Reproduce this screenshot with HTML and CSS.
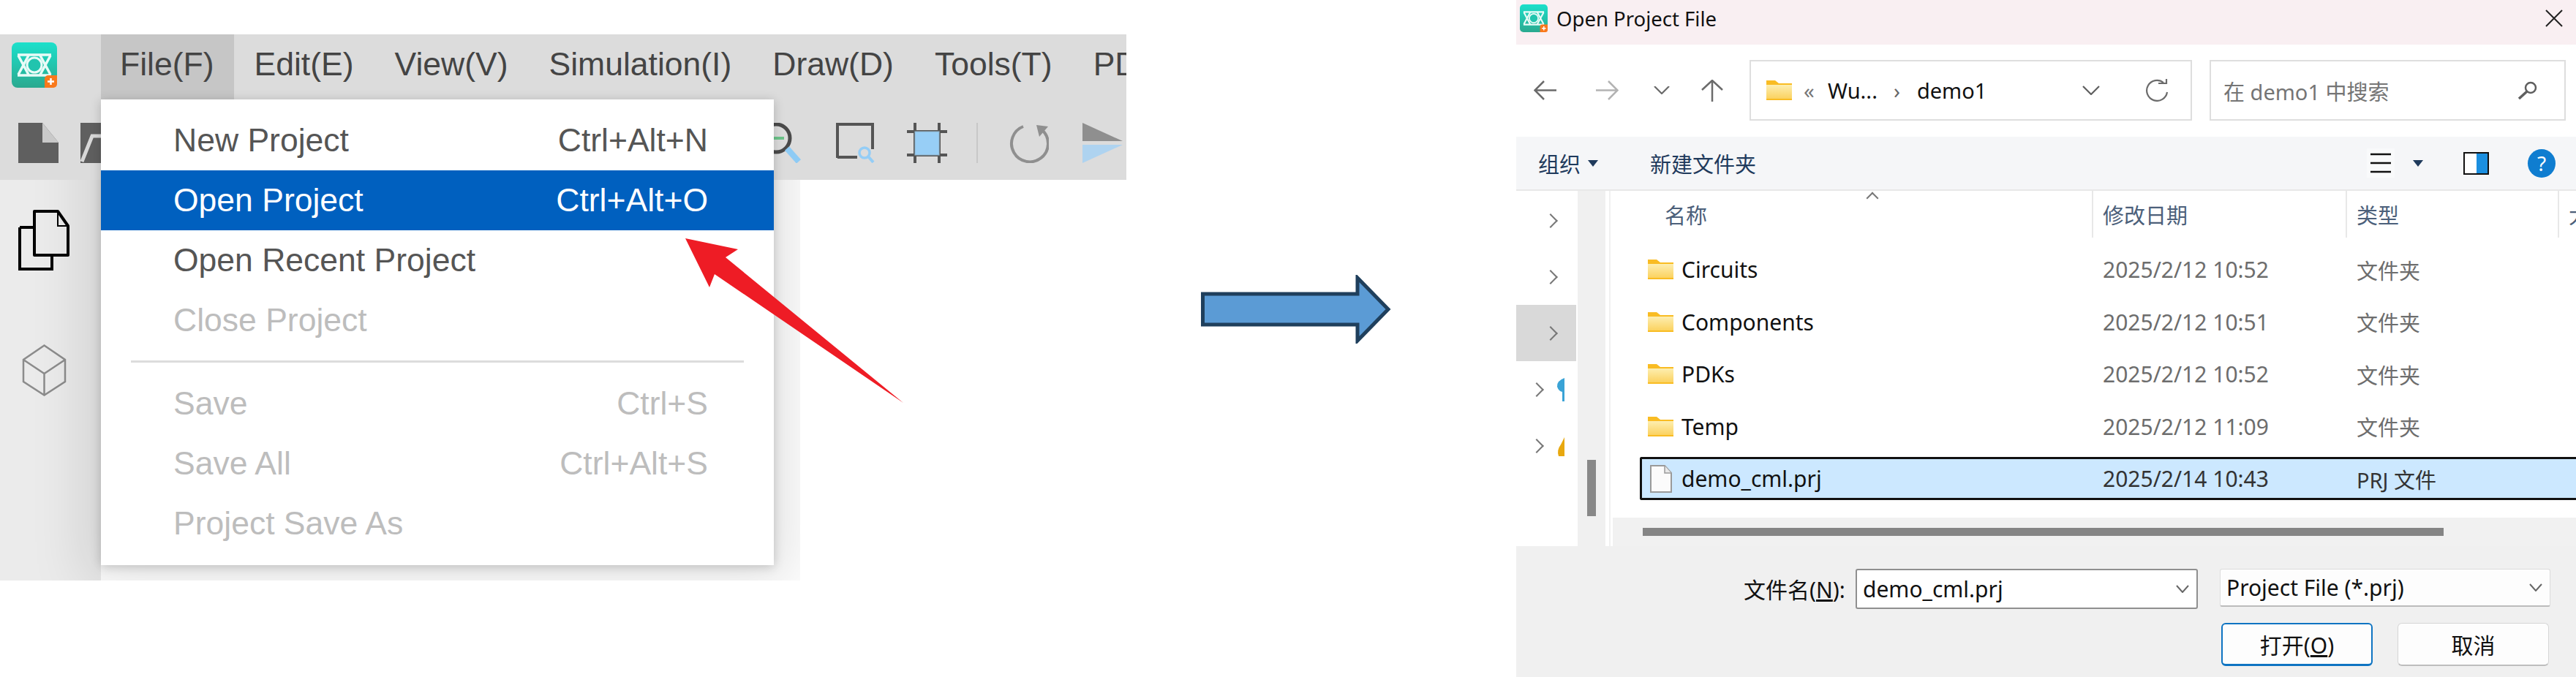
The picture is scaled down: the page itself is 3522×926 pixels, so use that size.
FILE: index.html
```html
<!DOCTYPE html>
<html lang="en">
  <head>
    <meta charset="UTF-8" />
    <title>Open Project</title>
    <link rel="stylesheet" href="styles.css">
  </head>
  <body>
    <svg class="defs" width="0" height="0">
      <defs>
        <linearGradient id="logoFill" x1="0" y1="0" x2="0" y2="1">
          <stop offset="0" stop-color="#1ce0cb" />
          <stop offset="1" stop-color="#2aa98f" />
        </linearGradient>
        <linearGradient id="folderFill" x1="0" y1="0" x2="0" y2="1">
          <stop offset="0" stop-color="#fdeeb0" />
          <stop offset="1" stop-color="#fbd260" />
        </linearGradient>
        <symbol id="logo" viewBox="0 0 62 62">
          <rect width="62" height="62" rx="8" fill="url(#logoFill)" />
          <path d="M8 17H54M8 45H54M9 18L23 44M23 18L9 44M39 18L53 44M53 18L39 44" fill="none" stroke="#e9fbf7" stroke-width="3.500" />
          <circle cx="31" cy="31" r="10" fill="#21c4ae" stroke="#e9fbf7" stroke-width="3" />
          <path d="M45 50a5 5 0 0 1 5-5h12v12a5 5 0 0 1-5 5H45z" fill="#f9791c" />
          <path d="M53.500 49v9M49 53.500h9" stroke="#fff" stroke-width="2.500" />
        </symbol>
        <symbol id="folder" viewBox="0 0 35 27">
          <path d="M0 0H12L17 4H35V27H0z" fill="#f9bc23" />
          <rect y="6" width="35" height="19" fill="url(#folderFill)" />
        </symbol>
      </defs>
    </svg>

    <div class="app">
      <div class="menubar">
        <div class="logo-cell"><svg class="logo-big"><use href="#logo" /></svg></div>
        <span class="menubar-item active">File(F)</span>
        <span class="menubar-item">Edit(E)</span>
        <span class="menubar-item">View(V)</span>
        <span class="menubar-item">Simulation(I)</span>
        <span class="menubar-item">Draw(D)</span>
        <span class="menubar-item">Tools(T)</span>
        <span class="menubar-item">PDK</span>
      </div>
      <div class="toolbar">
        <svg class="tool tool-new" viewBox="0 0 55 55">
          <path d="M0 0H33L55 27V55H0z" fill="#5f5f5f" />
          <path d="M33 0L55 27H33z" fill="#c9c9c9" />
        </svg>
        <svg class="tool tool-open" viewBox="0 0 55 55">
          <rect width="55" height="55" fill="#5f5f5f" />
          <path d="M2 53L16 18H40" fill="none" stroke="#d8d8d8" stroke-width="5" />
        </svg>
        <svg class="tool tool-zoom" viewBox="0 0 55 55">
          <circle cx="21" cy="21" r="19" fill="none" stroke="#4a4a4a" stroke-width="5" />
          <path d="M10 21H32" stroke="#6cc48a" stroke-width="4" />
          <path d="M36 35L52 53" stroke="#8ecbf5" stroke-width="8" />
        </svg>
        <svg class="tool tool-fit" viewBox="0 0 55 55">
          <path d="M3 48V2H51V36" fill="none" stroke="#555" stroke-width="4" />
          <path d="M3 47H30" stroke="#555" stroke-width="4" />
          <circle cx="40" cy="41" r="7" fill="none" stroke="#94cdf6" stroke-width="3.500" />
          <path d="M45 46L52 54" stroke="#94cdf6" stroke-width="4" />
        </svg>
        <svg class="tool tool-select" viewBox="0 0 55 55">
          <path d="M0 12H55M0 44H55M11 0V55M44 0V55" stroke="#555" stroke-width="4" />
          <rect x="11" y="12" width="33" height="32" fill="#97cef6" stroke="#8fb4cc" stroke-width="1" />
        </svg>
        <span class="tool-sep"></span>
        <svg class="tool tool-rotate" viewBox="0 0 55 55">
          <path d="M20 5A25 25 0 1 0 46 10" fill="none" stroke="#8f8f8f" stroke-width="4" />
          <path d="M38 3L54 5L42 19z" fill="#8f8f8f" />
        </svg>
        <svg class="tool tool-flip" viewBox="0 0 55 55">
          <path d="M0 0L55 25H0z" fill="#8f8f8f" />
          <path d="M0 30H55L0 55z" fill="#aed3f0" />
        </svg>
      </div>
      <div class="app-body">
        <div class="sidebar">
          <svg class="side-copy" viewBox="0 0 70 83">
            <path d="M2 24V81H46V64" fill="none" stroke="#000" stroke-width="4" />
            <path d="M2 24H22" stroke="#000" stroke-width="4" />
            <path d="M22 2H54L68 22V62H22z" fill="#ebebeb" stroke="#000" stroke-width="4" stroke-linejoin="round" />
            <path d="M54 2V22H68" fill="none" stroke="#000" stroke-width="2" />
          </svg>
          <svg class="side-cube" viewBox="0 0 61 71">
            <path d="M30.500 1.500L59 21V51L30.500 69.500L2 51V21zM2 21L30.500 40L59 21M30.500 40V69.500" fill="none" stroke="#8c8c8c" stroke-width="2.500" />
          </svg>
        </div>
        <div class="menu-glow"></div>
      </div>

      <div class="menu">
        <div class="menu-row"><span>New Project</span><span>Ctrl+Alt+N</span></div>
        <div class="menu-row selected"><span>Open Project</span><span>Ctrl+Alt+O</span></div>
        <div class="menu-row"><span>Open Recent Project</span></div>
        <div class="menu-row disabled"><span>Close Project</span></div>
        <div class="menu-sep"></div>
        <div class="menu-row disabled"><span>Save</span><span>Ctrl+S</span></div>
        <div class="menu-row disabled"><span>Save All</span><span>Ctrl+Alt+S</span></div>
        <div class="menu-row disabled"><span>Project Save As</span></div>
      </div>

      <svg class="red-arrow" viewBox="0 0 300 226">
        <path d="M1 0L73 15L56 26L299 225L41 49L34 67z" fill="#ee1c25" />
      </svg>
    </div>

    <div class="between">
      <svg class="blue-arrow" viewBox="0 0 260 94">
        <path d="M2.500 26H214V4L256 47L214 90V68H2.500z" fill="#5b9bd5" stroke="#1f3f5c" stroke-width="5" />
      </svg>
    </div>

    <div class="dialog">
      <div class="titlebar">
        <svg class="logo-small"><use href="#logo" /></svg>
        <span class="title-text">Open Project File</span>
        <svg class="close-x" viewBox="0 0 24 24">
          <path d="M1 1L23 23M23 1L1 23" stroke="#222" stroke-width="2" />
        </svg>
      </div>

      <div class="navbar">
        <svg class="nav-back" viewBox="0 0 31 27"><path d="M14 1L1.500 13.500L14 26M2 13.500H31" fill="none" stroke="#6b6b6b" stroke-width="2.500" /></svg>
        <svg class="nav-fwd" viewBox="0 0 31 27"><path d="M17 1L29.500 13.500L17 26M0 13.500H29" fill="none" stroke="#b3b3b3" stroke-width="2.500" /></svg>
        <svg class="nav-down" viewBox="0 0 22 11"><path d="M1 0L11 10L21 0" fill="none" stroke="#6b6b6b" stroke-width="2.200" /></svg>
        <svg class="nav-up" viewBox="0 0 30 30"><path d="M1 14L15 1L29 14M15 1V30" fill="none" stroke="#6b6b6b" stroke-width="2.500" /></svg>
        <div class="address">
          <svg class="addr-folder"><use href="#folder" /></svg>
          <span class="addr-more">«</span>
          <span class="addr-part">Wu...</span>
          <span class="addr-chev">›</span>
          <span class="addr-part">demo1</span>
          <svg class="addr-down" viewBox="0 0 24 13"><path d="M1 1L12 12L23 1" fill="none" stroke="#5f5f5f" stroke-width="2.200" /></svg>
          <svg class="addr-refresh" viewBox="0 0 31 31"><path d="M24 5A14 14 0 1 0 29 18" fill="none" stroke="#6b6b6b" stroke-width="2.200" /><path d="M17 6H28V0" fill="none" stroke="#6b6b6b" stroke-width="2.200" /></svg>
        </div>
        <div class="search">
          <span class="search-text">在 demo1 中搜索</span>
          <svg class="search-icon" viewBox="0 0 27 25"><circle cx="18" cy="9" r="7" fill="none" stroke="#5f5f5f" stroke-width="2.500" /><path d="M13 14L2 24" stroke="#5f5f5f" stroke-width="3.500" /></svg>
        </div>
      </div>

      <div class="cmdbar">
        <span class="cmd-org">组织</span>
        <span class="caret"></span>
        <span class="cmd-new">新建文件夹</span>
        <span class="view-btn">
          <svg viewBox="0 0 28 28"><path d="M0 2H28M0 14H28M0 26H28" stroke="#111" stroke-width="2.500" /></svg>
        </span>
        <span class="caret"></span>
        <svg class="pane-icon" viewBox="0 0 35 31">
          <rect x="1" y="1" width="33" height="29" fill="#fff" stroke="#111" stroke-width="2" />
          <rect x="18" y="2" width="15" height="27" fill="#1b8fe0" />
        </svg>
        <span class="help">?</span>
      </div>

      <div class="main">
        <div class="tree">
          <div class="tree-row"><span class="chev"></span></div>
          <div class="tree-row"><span class="chev"></span></div>
          <div class="tree-row on"><span class="chev"></span></div>
          <div class="tree-row shallow">
            <span class="chev"></span>
            <svg class="tree-icon" viewBox="0 0 11 32"><path d="M11 0Q0 4 1 12Q3 18 8 19V32H11z" fill="#3aa3d6" /></svg>
          </div>
          <div class="tree-row shallow">
            <span class="chev"></span>
            <svg class="tree-icon" viewBox="0 0 11 32"><path d="M11 4L6 14Q0 22 3 30H11z" fill="#e8a80f" /></svg>
          </div>
        </div>
        <div class="vtrack"><div class="vthumb"></div></div>
        <div class="list">
          <div class="list-head">
            <span class="head-name">名称<i class="sort"></i></span>
            <span class="head-date">修改日期</span>
            <span class="head-type">类型</span>
            <span class="head-size">大</span>
          </div>
          <div class="rows">
            <div class="row">
              <span class="cell-name"><svg class="row-icon"><use href="#folder" /></svg>Circuits</span>
              <span class="cell-date">2025/2/12 10:52</span><span class="cell-type">文件夹</span>
            </div>
            <div class="row">
              <span class="cell-name"><svg class="row-icon"><use href="#folder" /></svg>Components</span>
              <span class="cell-date">2025/2/12 10:51</span><span class="cell-type">文件夹</span>
            </div>
            <div class="row">
              <span class="cell-name"><svg class="row-icon"><use href="#folder" /></svg>PDKs</span>
              <span class="cell-date">2025/2/12 10:52</span><span class="cell-type">文件夹</span>
            </div>
            <div class="row">
              <span class="cell-name"><svg class="row-icon"><use href="#folder" /></svg>Temp</span>
              <span class="cell-date">2025/2/12 11:09</span><span class="cell-type">文件夹</span>
            </div>
            <div class="row picked">
              <span class="cell-name">
                <svg class="row-icon file-icon" viewBox="0 0 30 38"><path d="M1 1H20L29 11V37H1z" fill="#fbfbfb" stroke="#9a9a9a" stroke-width="2" /><path d="M20 1V11H29" fill="#e8e8e8" stroke="#9a9a9a" stroke-width="1.500" /></svg>
                demo_cml.prj
              </span>
              <span class="cell-date">2025/2/14 10:43</span><span class="cell-type">PRJ 文件</span>
            </div>
          </div>
          <div class="hbar"><div class="hthumb"></div></div>
        </div>
      </div>

      <div class="footer">
        <div class="foot-row">
          <span class="foot-label">文件名(<u>N</u>):</span>
          <div class="foot-input">
            <span>demo_cml.prj</span>
            <svg viewBox="0 0 18 11"><path d="M1 1L9 10L17 1" fill="none" stroke="#666" stroke-width="2" /></svg>
          </div>
          <div class="foot-filter">
            <span>Project File (*.prj)</span>
            <svg viewBox="0 0 18 11"><path d="M1 1L9 10L17 1" fill="none" stroke="#666" stroke-width="2" /></svg>
          </div>
        </div>
        <div class="foot-btns">
          <button class="btn primary">打开(<u>O</u>)</button>
          <button class="btn">取消</button>
        </div>
      </div>
    </div>
  </body>
</html>
```

FILE: styles.css
```css
* {
  box-sizing: border-box;
}

body {
  margin: 0;
  width: 3522px;
  height: 926px;
  display: flex;
  overflow: hidden;
  background: #fff;
  font-family: "Liberation Sans", Arial, sans-serif;
}

.defs {
  position: absolute;
}

svg {
  display: block;
  flex-shrink: 0;
}

/* left half: the application window */
.app {
  position: relative;
  width: 1540px;
  margin-top: 47px;
  flex-shrink: 0;
}

.menubar {
  height: 89px;
  display: flex;
  background: #dcdcdc;
  overflow: hidden;
  font-size: 44.5px;
  color: #444;
}

.logo-cell {
  width: 138px;
  padding: 11px 0 0 16px;
  flex-shrink: 0;
}

.logo-big {
  width: 62px;
  height: 62px;
}

.menubar-item {
  padding: 16px 28px 0;
  white-space: nowrap;
  flex-shrink: 0;
}

.menubar-item.active {
  background: #c6c6c6;
  padding: 16px 27px 0 26px;
}

.toolbar {
  height: 110px;
  padding: 32px 0 0 25px;
  display: flex;
  background: #dcdcdc;
}

.tool {
  width: 55px;
  height: 55px;
}

.tool-open {
  margin-left: 30px;
}

.tool-zoom {
  margin-left: 875px;
}

.tool-fit {
  margin-left: 47px;
}

.tool-select {
  margin-left: 43px;
}

.tool-sep {
  width: 2px;
  height: 55px;
  margin-left: 40px;
  background: #c8c8c8;
}

.tool-rotate {
  margin-left: 42px;
}

.tool-flip {
  margin-left: 46px;
}

.app-body {
  position: relative;
  width: 1094px;
  height: 548px;
  overflow: hidden;
}

.sidebar {
  width: 138px;
  height: 100%;
  background: #ebebeb;
  padding: 41px 0 0 25px;
}

.side-copy {
  width: 70px;
  height: 83px;
}

.side-cube {
  width: 61px;
  height: 71px;
  margin: 101px 0 0 5px;
}

/* soft shadow of the menu, cut off by the edge of the shot */
.menu-glow {
  position: absolute;
  left: 138px;
  top: -110px;
  width: 920px;
  height: 637px;
  box-shadow: 0 0 70px 25px rgba(0, 0, 0, 0.11);
}

.menu {
  position: absolute;
  left: 138px;
  top: 89px;
  width: 920px;
  height: 637px;
  padding: 15px 0 16px;
  background: #fff;
  font-size: 44.5px;
  color: #555;
  box-shadow: 0 2px 14px rgba(0, 0, 0, 0.2);
}

.menu-row {
  height: 82px;
  padding: 0 90px 0 99px;
  display: flex;
  align-items: center;
  justify-content: space-between;
}

.menu-row.selected {
  background: #0060bf;
  color: #fff;
}

.menu-row.disabled {
  color: #bdbdbd;
}

.menu-sep {
  height: 3px;
  margin: 14px 41px 15px;
  background: #dcdcdc;
}

.red-arrow {
  position: absolute;
  left: 936px;
  top: 279px;
  width: 300px;
  height: 226px;
}

/* the big arrow between the two shots */
.between {
  width: 533px;
  flex-shrink: 0;
  padding: 376px 0 0 102px;
}

.blue-arrow {
  width: 260px;
  height: 94px;
}

/* right half: the open file dialog */
.dialog {
  width: 1449px;
  height: 926px;
  display: flex;
  flex-direction: column;
  flex-shrink: 0;
  font-family: "Noto Sans", "Noto Sans CJK SC", sans-serif;
  font-size: 30px;
  color: #111;
}

.titlebar {
  height: 61px;
  padding: 6px 18px 0 5px;
  display: flex;
  background: #f9eff2;
  font-size: 27.5px;
}

.logo-small {
  width: 38px;
  height: 38px;
}

.title-text {
  margin-left: 12px;
  line-height: 40px;
}

.close-x {
  width: 24px;
  height: 24px;
  margin: 7px 0 0 auto;
}

.navbar {
  height: 126px;
  padding: 21px 14px 22px 0;
  display: flex;
  align-items: center;
  font-size: 29px;
}

.nav-back {
  width: 31px;
  height: 27px;
  margin-left: 24px;
}

.nav-fwd {
  width: 31px;
  height: 27px;
  margin-left: 54px;
}

.nav-down {
  width: 22px;
  height: 11px;
  margin-left: 48px;
}

.nav-up {
  width: 30px;
  height: 30px;
  margin-left: 43px;
}

.address {
  width: 605px;
  height: 83px;
  margin-left: 36px;
  padding: 0 30px 0 21px;
  display: flex;
  align-items: center;
  border: 2px solid #dedede;
}

.addr-folder {
  width: 35px;
  height: 27px;
}

.addr-more {
  margin-left: 16px;
  width: 33px;
  color: #777;
}

.addr-chev {
  width: 32px;
  margin-left: 22px;
  color: #666;
}

.addr-down {
  width: 24px;
  height: 13px;
  margin-left: auto;
}

.addr-refresh {
  width: 31px;
  height: 31px;
  margin-left: 63px;
}

.search {
  flex: 1;
  height: 83px;
  margin-left: 24px;
  padding: 0 37px 0 17px;
  display: flex;
  align-items: center;
  justify-content: space-between;
  border: 2px solid #dedede;
  color: #757575;
}

.search-icon {
  width: 27px;
  height: 25px;
}

.cmdbar {
  height: 74px;
  display: flex;
  align-items: center;
  padding-left: 30px;
  background: #f5f6f8;
  border-bottom: 2px solid #e8e8e8;
  color: #1f3a5c;
  font-size: 29px;
}

.caret {
  width: 0;
  height: 0;
  margin-left: 10px;
  border-left: 7.500px solid transparent;
  border-right: 7.500px solid transparent;
  border-top: 9px solid #1f3a5c;
}

.cmd-new {
  margin-left: 71px;
}

.view-btn {
  width: 38px;
  height: 40px;
  margin-left: 835px;
  padding: 6px 5px;
  background: #f9fafb;
}

.view-btn svg {
  width: 28px;
  height: 28px;
}

.cmdbar .view-btn + .caret {
  margin-left: 25px;
}

.pane-icon {
  width: 35px;
  height: 31px;
  margin-left: 55px;
}

.help {
  width: 38px;
  height: 39px;
  margin-left: 53px;
  border-radius: 50%;
  background: #0f7dd0;
  color: #fff;
  font-size: 28px;
  line-height: 39px;
  text-align: center;
}

.main {
  height: 486px;
  display: flex;
}

.tree {
  width: 84px;
  padding-top: 2px;
  overflow: hidden;
  flex-shrink: 0;
}

.tree-row {
  height: 77px;
  padding-left: 42px;
  display: flex;
  align-items: center;
}

.tree-row.on {
  background: #d9d9d9;
  width: 82px;
}

.tree-row.shallow {
  padding-left: 23px;
}

.chev {
  width: 14px;
  height: 14px;
  margin-left: -2px;
  border-top: 2.500px solid #777;
  border-right: 2.500px solid #777;
  transform: rotate(45deg);
}

.tree-icon {
  width: 11px;
  height: 32px;
  margin-left: 20px;
}

.vtrack {
  width: 38px;
  padding: 368px 13px 0;
  background: #f0f0f0;
  flex-shrink: 0;
}

.vthumb {
  height: 77px;
  background: #888;
}

.list {
  flex: 1;
  margin-left: 5px;
  border-left: 2px solid #f0f0f0;
  display: flex;
  flex-direction: column;
  min-width: 0;
}

.list-head {
  height: 64px;
  display: flex;
  color: #4c607a;
  font-size: 29px;
  line-height: 68px;
  flex-shrink: 0;
}

.list-head span {
  padding-left: 13px;
  border-left: 2px solid #e8e8e8;
  white-space: nowrap;
}

.list-head .head-name {
  position: relative;
  width: 658px;
  padding-left: 74px;
  border-left: 0;
}

.sort {
  position: absolute;
  left: 352px;
  top: 4px;
  width: 12px;
  height: 12px;
  border-top: 2px solid #777;
  border-left: 2px solid #777;
  transform: rotate(45deg);
}

.head-date {
  width: 347px;
}

.head-type {
  width: 290px;
}

.head-size {
  flex: 1;
  overflow: hidden;
}

.rows {
  flex: 1;
  padding: 14px 0 0 40px;
  overflow: hidden;
}

.row {
  height: 59px;
  margin-bottom: 12.500px;
  display: flex;
  align-items: center;
  border: 3px solid transparent;
  color: #111;
}

.row.picked {
  background: #cce8ff;
  border-color: #111;
  border-right: 0;
  border-radius: 3px 0 0 3px;
}

.cell-name {
  width: 630px;
  padding-left: 8px;
  display: flex;
  align-items: center;
  gap: 11px;
  flex-shrink: 0;
}

.row-icon {
  width: 35px;
  height: 27px;
}

.row-icon.file-icon {
  width: 30px;
  height: 38px;
  margin: 0 2px 0 3px;
}

.cell-date {
  width: 347px;
  color: #6d6d6d;
  flex-shrink: 0;
}

.cell-type {
  color: #6d6d6d;
  font-size: 29px;
}

.row.picked .cell-date,
.row.picked .cell-type {
  color: #333;
}

.hbar {
  height: 39px;
  padding: 14px 0 0 41px;
  margin-left: 3px;
  background: #f1f1f1;
  flex-shrink: 0;
}

.hthumb {
  width: 1095px;
  height: 11px;
  background: #858585;
}

.footer {
  flex: 1;
  padding-top: 31px;
  background: #f0f0f0;
}

.foot-row {
  display: flex;
  align-items: flex-start;
  padding-left: 311px;
}

.foot-label {
  width: 138px;
  line-height: 58px;
  white-space: nowrap;
}

.foot-input,
.foot-filter {
  display: flex;
  align-items: center;
  justify-content: space-between;
  background: #fff;
  padding-right: 10px;
}

.foot-input {
  width: 468px;
  height: 55px;
  margin-left: 15px;
  padding-left: 8px;
  border: 2px solid #8f8f8f;
  border-radius: 3px;
}

.foot-filter {
  width: 452px;
  height: 52px;
  margin-left: 30px;
  padding-left: 8px;
  background: #fdfdfd;
  border: 1px solid #dcdcdc;
  border-bottom: 2px solid #bbb;
  border-radius: 3px;
}

.foot-input svg,
.foot-filter svg {
  width: 18px;
  height: 11px;
}

.foot-btns {
  display: flex;
  gap: 34px;
  margin: 16px 0 0 964px;
}

.btn {
  width: 207px;
  height: 59px;
  padding: 0;
  background: #fdfdfd;
  border: 1px solid #d6d6d6;
  border-bottom: 2px solid #bdbdbd;
  border-radius: 6px;
  font-family: inherit;
  font-size: 30px;
  color: #111;
}

.btn.primary {
  border: 2px solid #0f74c2;
  border-bottom-width: 3px;
}
```
